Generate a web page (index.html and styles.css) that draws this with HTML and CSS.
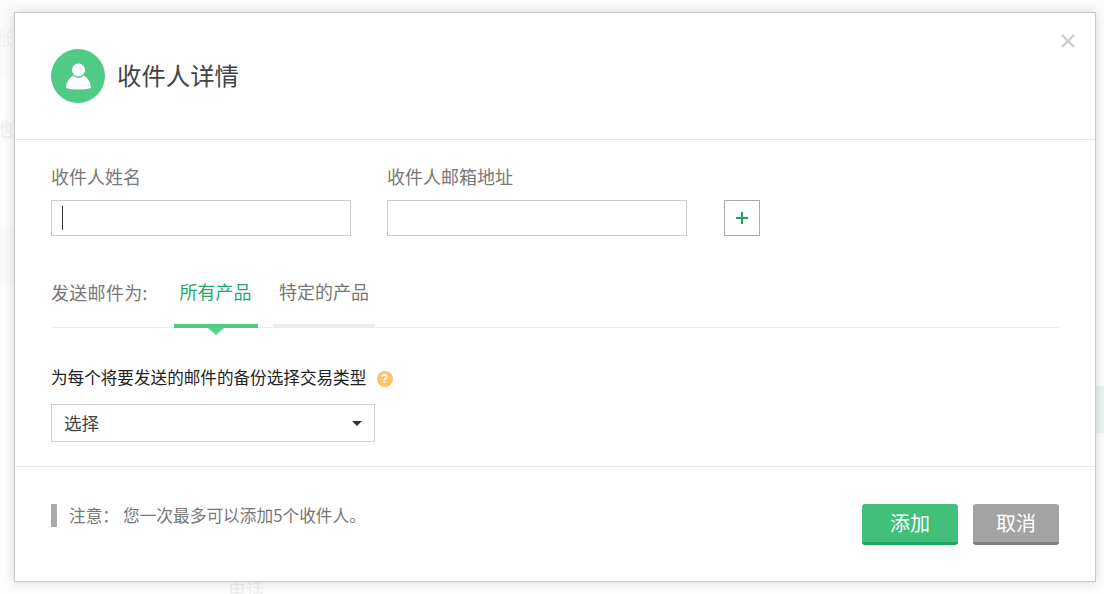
FILE: index.html
```html
<!DOCTYPE html>
<html lang="zh-CN">
<head>
<meta charset="utf-8">
<title>收件人详情</title>
<link rel="stylesheet" href="styles.css">
</head>
<body>
<div class="ghost-band band-top"></div>
<div class="ghost-band band-left"></div>
<div class="ghost-band band-right"></div>
<div class="ghost ghost-a">账</div>
<div class="ghost ghost-b">地</div>
<div class="ghost ghost-c">电话</div>
<main class="modal">
  <header class="modal-head">
    <span class="avatar">
      <svg width="54" height="54" viewBox="0 0 54 54"><circle cx="27" cy="27" r="27" fill="#4fcb85"/><circle cx="27.500" cy="21" r="6.500" fill="#fff"/><path d="M15 39c0-5 3-10 7.500-12.500 1.200 1.500 3 2.500 5 2.500s3.800-1 5-2.500c4.500 2.500 7.500 7.500 7.500 12.500-4 1.200-8 1.500-12.500 1.500s-8.500-.3-12.500-1.500z" fill="#fff"/></svg>
    </span>
    <h1 class="modal-title">收件人详情</h1>
    <svg class="close" width="14" height="14" viewBox="0 0 14 14"><path d="M1 1l12 12M13 1L1 13" stroke="#ccc" stroke-width="2.400" fill="none"/></svg>
  </header>
  <section class="modal-body">
    <div class="fields">
      <div class="field">
        <label class="field-label">收件人姓名</label>
        <div class="input"><span class="caret"></span></div>
      </div>
      <div class="field">
        <label class="field-label">收件人邮箱地址</label>
        <div class="input"></div>
      </div>
      <button class="add-btn" type="button">
        <svg width="12" height="12" viewBox="0 0 12 12"><path d="M6 0v12M0 6h12" stroke="#1fa463" stroke-width="2" fill="none"/></svg>
      </button>
    </div>
    <div class="tabs">
      <span class="tabs-label">发送邮件为:</span>
      <div class="tab tab-active">所有产品</div>
      <div class="tab tab-idle">特定的产品</div>
    </div>
    <div class="question">
      <span class="question-text">为每个将要发送的邮件的备份选择交易类型</span>
      <span class="help">?</span>
    </div>
    <div class="select"><span class="select-text">选择</span><span class="arrow"></span></div>
  </section>
  <footer class="modal-foot">
    <div class="note"><span class="note-key">注意：</span><span>您一次最多可以添加5个收件人。</span></div>
    <div class="actions">
      <button class="btn btn-green" type="button">添加</button>
      <button class="btn btn-gray" type="button">取消</button>
    </div>
  </footer>
</main>
</body>
</html>
```
FILE: styles.css
```css
* { box-sizing: border-box; }
html, body { height: 100%; }
body {
  margin: 0;
  height: 594px;
  overflow: hidden;
  background: #fdfdfd;
  padding: 12px 0 0 14px;
  font-family: "Noto Sans CJK SC", "Liberation Sans", sans-serif;
  position: relative;
}
.ghost { position: absolute; color: #f1f1f1; font-size: 20px; line-height: 20px; }
.ghost-a { left: -7px; top: 28px; }
.ghost-b { left: -7px; top: 119px; font-weight: 700; color: #f1f1f1; }
.ghost-c { left: 228px; top: 579px; font-size: 18px; color: #eee; }
.ghost-band { position: absolute; }
.band-top { left: 0; top: 0; width: 14px; height: 78px; background: #fbfbfb; }
.band-left { left: 0; top: 229px; width: 14px; height: 57px; background: #fafafa; }
.band-right { left: 1096px; top: 386px; width: 8px; height: 47px; background: #e9f5f0; }

.modal {
  position: relative;
  width: 1082px;
  height: 570px;
  background: #fff;
  border: 1px solid #c9c9c9;
  box-shadow: 0 0 10px rgba(0, 0, 0, .16);
  display: flex;
  flex-direction: column;
}
.modal-head {
  height: 127px;
  flex: none;
  padding: 36px 36px 0;
  display: flex;
  align-items: flex-start;
  gap: 12px;
  border-bottom: 1px solid #e8e8e8;
}
.avatar { width: 54px; height: 54px; display: block; flex: none; }
.avatar svg { display: block; }
.modal-title {
  margin: 0;
  font-size: 24.400px;
  font-weight: 400;
  line-height: 52px;
  color: #444;
}
.close { position: absolute; left: 1046px; top: 21px; }

.modal-body { height: 327px; flex: none; padding: 0 36px; border-bottom: 1px solid #e8e8e8; }
.fields { display: flex; align-items: flex-end; gap: 36px; padding-top: 23px; }
.field-label { display: block; font-size: 18px; line-height: 26px; color: #777; margin-bottom: 11px; }
.input {
  position: relative;
  width: 300px;
  height: 36px;
  border: 1px solid #ccc;
  background: #fff;
}
.caret { position: absolute; left: 10px; top: 5px; width: 1px; height: 24px; background: #333; }
.add-btn {
  width: 36px;
  height: 36px;
  margin-left: 1px;
  padding: 0;
  border: 1px solid #aaa;
  background: #fff;
  display: flex;
  align-items: center;
  justify-content: center;
}
.add-btn svg { display: block; }

.tabs {
  display: flex;
  align-items: stretch;
  height: 60px;
  margin-top: 32px;
  border-bottom: 1px solid #eee;
  font-size: 18px;
  color: #777;
}
.tabs-label { width: 123px; flex: none; line-height: 48px; letter-spacing: .3px; white-space: nowrap; }
.tab { position: relative; text-align: center; line-height: 46px; height: 60px; border-bottom: 4px solid transparent; }
.tab-active { width: 84px; padding-right: 1px; color: #1fa870; border-bottom-color: #4fcb85; margin-right: 15px; }
.tab-active::after {
  content: "";
  position: absolute;
  left: 34px;
  top: 60px;
  border-left: 8px solid transparent;
  border-right: 8px solid transparent;
  border-top: 7px solid #5ad08d;
}
.tab-idle { width: 102px; border-bottom-color: #eee; }

.question { display: flex; align-items: center; margin-top: 37px; height: 26px; }
.question-text { padding-bottom: 3px; font-size: 16.600px; color: #222; white-space: nowrap; }
.help {
  width: 16px;
  height: 16px;
  margin: 2px 0 0 10.500px;
  border-radius: 50%;
  background: #fcc56b;
  color: #fff;
  font-family: "Liberation Sans", sans-serif;
  font-size: 12px;
  font-weight: 700;
  line-height: 16px;
  text-align: center;
}
.select {
  width: 324px;
  height: 38px;
  margin-top: 13px;
  padding: 0 12px;
  border: 1px solid #d0d0d0;
  display: flex;
  align-items: center;
  justify-content: space-between;
  font-size: 17.500px;
  color: #444;
}
.select-text { padding-bottom: 2px; }
.arrow {
  border-left: 5px solid transparent;
  border-right: 5px solid transparent;
  border-top: 5px solid #333;
}

.modal-foot { flex: 1; padding: 37px 36px 0; display: flex; justify-content: space-between; align-items: flex-start; }
.note {
  height: 23px;
  border-left: 6px solid #aaa;
  padding-left: 12px;
  font-size: 16.700px;
  line-height: 23px;
  color: #777;
  white-space: nowrap;
}
.note-key { display: inline-block; width: 54px; }
.actions { display: flex; gap: 15px; }
.btn {
  height: 41px;
  padding: 0;
  border: 0;
  border-bottom: 3px solid;
  border-radius: 3px;
  color: #fff;
  font-family: inherit;
  font-size: 20px;
  line-height: 36px;
}
.btn-green { width: 96px; background: #41c07a; border-bottom-color: #1fa463; }
.btn-gray { width: 86px; background: #a3a3a3; border-bottom-color: #7f7f7f; }
```
